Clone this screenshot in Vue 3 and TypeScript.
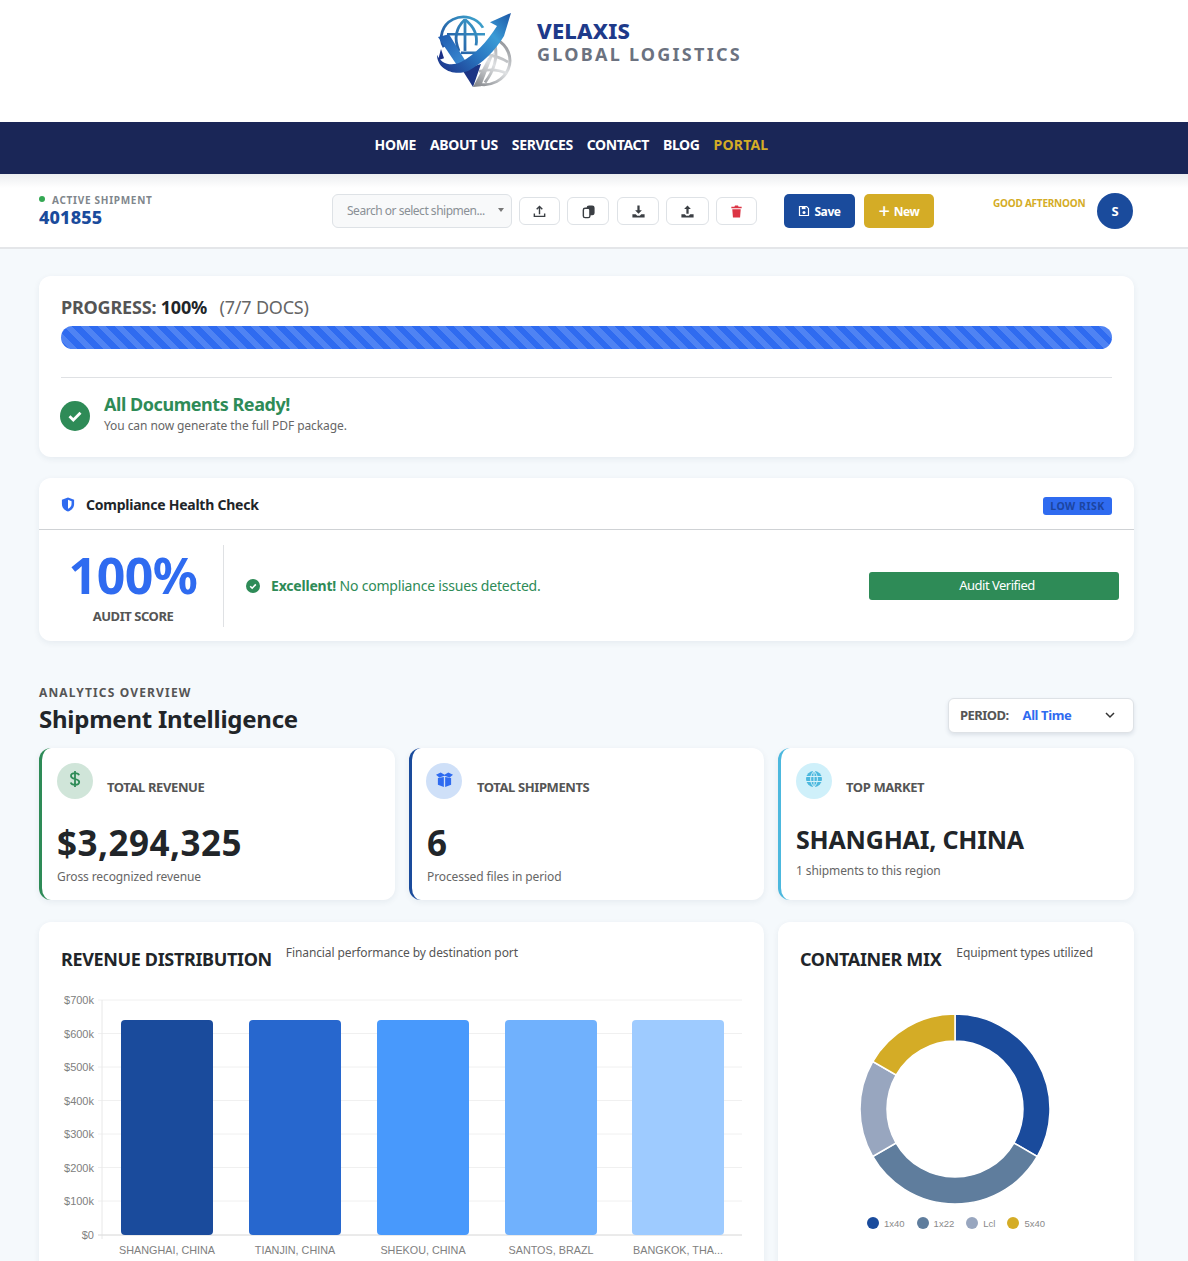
<script setup lang="ts">
const navItems = ['HOME', 'ABOUT US', 'SERVICES', 'CONTACT', 'BLOG']
const ticks = [
  { label: '$700k', y: 0 }, { label: '$600k', y: 33.5 }, { label: '$500k', y: 67 }, { label: '$400k', y: 100.5 },
  { label: '$300k', y: 134 }, { label: '$200k', y: 167.5 }, { label: '$100k', y: 201 }, { label: '$0', y: 235 },
]
const bars = [
  { x: 19, color: '#1a4b9c', label: 'SHANGHAI, CHINA' },
  { x: 147, color: '#2767ce', label: 'TIANJIN, CHINA' },
  { x: 275, color: '#4899fc', label: 'SHEKOU, CHINA' },
  { x: 403, color: '#70b1fd', label: 'SANTOS, BRAZL' },
  { x: 530, color: '#9ecbff', label: 'BANGKOK, THA...' },
]
function arc(a0: number, a1: number): string {
  const R = 95, r = 68, cx = 100, cy = 100
  const p = (rad: number, a: number) => {
    const t = (a - 90) * Math.PI / 180
    return `${(cx + rad * Math.cos(t)).toFixed(2)} ${(cy + rad * Math.sin(t)).toFixed(2)}`
  }
  return `M${p(R, a0)}A${R} ${R} 0 0 1 ${p(R, a1)}L${p(r, a1)}A${r} ${r} 0 0 0 ${p(r, a0)}Z`
}
const slices = [
  { d: arc(0, 120), color: '#1a4b9c', label: '1x40' },
  { d: arc(120, 240), color: '#5f7d9d', label: '1x22' },
  { d: arc(240, 300), color: '#98a6bf', label: 'Lcl' },
  { d: arc(300, 360), color: '#d4ac26', label: '5x40' },
]
</script>

<template>
  <div class="page">
    <header class="brand">
      <svg class="logo" viewBox="0 0 78 82" preserveAspectRatio="none" aria-label="Velaxis logo">
        <defs>
          <linearGradient id="gArrow" gradientUnits="userSpaceOnUse" x1="2" y1="66" x2="76" y2="1">
            <stop offset="0" stop-color="#1b2f86" />
            <stop offset="0.45" stop-color="#2a78c2" />
            <stop offset="0.7" stop-color="#3a9bd6" />
            <stop offset="1" stop-color="#1c57a6" />
          </linearGradient>
          <linearGradient id="gSilver" gradientUnits="userSpaceOnUse" x1="38" y1="80" x2="74" y2="30">
            <stop offset="0" stop-color="#7f8287" />
            <stop offset="0.5" stop-color="#dfe1e3" />
            <stop offset="1" stop-color="#85888d" />
          </linearGradient>
          <linearGradient id="gGlobe" gradientUnits="userSpaceOnUse" x1="8" y1="44" x2="50" y2="8">
            <stop offset="0" stop-color="#1d4a9b" />
            <stop offset="1" stop-color="#3fa8cf" />
          </linearGradient>
          <linearGradient id="gV" x1="0" y1="0" x2="1" y2="1">
            <stop offset="0" stop-color="#1d58ad" />
            <stop offset="1" stop-color="#3d8fd6" />
          </linearGradient>
        </defs>
        <g fill="none" stroke="url(#gGlobe)" stroke-width="2.800">
          <path d="M9 38A22 22 0 0 1 48 17" />
          <path d="M30 8V42" />
          <path d="M30 8Q16 22 24 42" />
          <path d="M30 8Q44 20 41 36" />
          <path d="M12 24H50" />
          <path d="M26 44H41" />
        </g>
        <g fill="none" stroke="url(#gSilver)" stroke-width="3">
          <path d="M62 30A26 26 0 0 1 44 78" />
          <path d="M52 46Q64 48 73 54" />
          <path d="M44 64Q60 60 71 66" />
          <path d="M60 36Q64 56 50 76" />
        </g>
        <path d="M3 27L14 24L30 52L23 59Z" fill="url(#gV)" />
        <path d="M27 62L38 81L46 56Z" fill="#1c3484" />
        <path d="M38 81L53 50L59 44L46 80Z" fill="url(#gSilver)" />
        <path d="M2 46C2 62 20 70 34 63C47 56 60 42 69 26L76 1L55 11L62 15C52 32 40 46 26 54C16 59 6 56 2 46Z" fill="url(#gArrow)" />
        <path d="M6 40L3 52L9 50Z" fill="#1b2f86" />
      </svg>
      <div class="brand-text">
        <div class="brand-name">VELAXIS</div>
        <div class="brand-sub">GLOBAL LOGISTICS</div>
      </div>
    </header>

    <nav class="nav">
      <a v-for="n in navItems" :key="n" class="nav-link">{{ n }}</a>
      <a class="nav-link portal">PORTAL</a>
    </nav>

    <section class="toolbar">
      <div class="active">
        <div class="active-label"><span class="dot"></span>ACTIVE SHIPMENT</div>
        <div class="active-num">401855</div>
      </div>
      <div class="select">
        <span>Search or select shipmen...</span>
        <span class="caret"></span>
      </div>
      <button class="icon-btn b1" aria-label="Upload">
        <svg viewBox="0 0 16 16" class="ic"><path d="M8 11V3M5 5.600L8 2.600l3 3M2.500 10v3.200h11V10" fill="none" stroke="#3b3f44" stroke-width="1.500" /></svg>
      </button>
      <button class="icon-btn b2" aria-label="Copy">
        <svg viewBox="0 0 16 16" class="ic"><rect x="6" y="1.500" width="8.500" height="10.500" rx="2.500" fill="#3b3f44" /><rect x="2.500" y="4.500" width="7" height="10" rx="1.800" fill="#fff" stroke="#3b3f44" stroke-width="1.500" /></svg>
      </button>
      <button class="icon-btn b3" aria-label="Download">
        <svg viewBox="0 0 16 16" class="ic"><path d="M6.800 1.500h2.400v5.200h2.400L8 10.400 4.400 6.700h2.400z" fill="#3b3f44" /><path d="M1.500 11h3.600l1.500 1.400h2.800L10.900 11h3.600v3.500h-13z" fill="#3b3f44" /></svg>
      </button>
      <button class="icon-btn b4" aria-label="Export">
        <svg viewBox="0 0 16 16" class="ic"><path d="M6.800 10.400h2.400V5.300h2.400L8 1.500 4.400 5.300h2.400z" fill="#3b3f44" /><path d="M1.500 11h3.600l1.500 1.400h2.800L10.900 11h3.600v3.500h-13z" fill="#3b3f44" /></svg>
      </button>
      <button class="icon-btn b5" aria-label="Delete">
        <svg viewBox="0 0 16 16" class="ic"><path d="M2.500 2.800h3.300l.6-1.100h3.200l.6 1.100h3.300v1.700h-11zM3.500 5.500h9l-.7 8.800H4.200z" fill="#dc3545" /></svg>
      </button>
      <button class="action save">
        <svg viewBox="0 0 16 16" class="ic-sm"><path d="M2 2h9.500L14 4.500V14H2z" fill="none" stroke="#fff" stroke-width="1.600" /><rect x="5" y="2.500" width="5" height="3" fill="#fff" /><circle cx="8" cy="10" r="2" fill="#fff" /></svg>
        Save
      </button>
      <button class="action new"><span class="plus">+</span> New</button>
      <div class="greet">GOOD AFTERNOON</div>
      <div class="avatar">S</div>
    </section>

    <main class="content">
      <section class="card progress-card">
        <div class="progress-title">PROGRESS: <b>100%</b> <span>(7/7 DOCS)</span></div>
        <div class="progress-bar"></div>
        <hr class="rule" />
        <div class="ready">
          <svg viewBox="0 0 30 30" class="ready-ic"><circle cx="15" cy="15" r="15" fill="#2e8b57" /><path d="M9.500 15.200l3.800 3.800 7.200-7.200" fill="none" stroke="#fff" stroke-width="2.800" /></svg>
          <div>
            <div class="ready-title">All Documents Ready!</div>
            <div class="ready-sub">You can now generate the full PDF package.</div>
          </div>
        </div>
      </section>

      <section class="card compliance">
        <div class="comp-head">
          <svg viewBox="0 0 14 16" class="shield"><path d="M7 0.500L13.500 3v4.500c0 4-2.700 6.700-6.500 8C3.200 14.200.5 11.500.5 7.500V3z" fill="#2f6bf0" /><path d="M7 3L10.800 4.500V7.500c0 2.400-1.500 4-3.800 5z" fill="#fff" /></svg>
          <span class="comp-title">Compliance Health Check</span>
          <span class="badge">LOW RISK</span>
        </div>
        <div class="comp-body">
          <div class="score">
            <div class="score-num">100%</div>
            <div class="score-label">AUDIT SCORE</div>
          </div>
          <div class="comp-msg">
            <svg viewBox="0 0 14 14" class="msg-ic"><circle cx="7" cy="7" r="7" fill="#2e8b57" /><path d="M4.200 7.200l2 2 3.600-3.800" fill="none" stroke="#fff" stroke-width="1.600" /></svg>
            <span><b>Excellent!</b> No compliance issues detected.</span>
          </div>
          <div class="verified">Audit Verified</div>
        </div>
      </section>

      <section class="analytics-head">
        <div>
          <div class="eyebrow">ANALYTICS OVERVIEW</div>
          <h2 class="intel">Shipment Intelligence</h2>
        </div>
        <div class="period">
          <span class="period-label">PERIOD:</span>
          <span class="period-val">All Time</span>
          <svg viewBox="0 0 12 12" class="chev"><path d="M2 4l4 4 4-4" fill="none" stroke="#333" stroke-width="1.500" /></svg>
        </div>
      </section>

      <section class="kpis">
        <article class="card kpi green">
          <div class="kpi-head">
            <span class="kpi-ic ic-green">
              <svg viewBox="0 0 12 18" class="kpi-glyph"><path d="M10 5.200C9.600 3.800 8 3.200 6 3.200 3.800 3.200 2 4.200 2 6c0 4 8.200 2 8.200 6 0 1.800-1.900 2.800-4.200 2.800-2.200 0-3.800-.8-4.300-2.400M6 1v16" fill="none" stroke="#2e8b57" stroke-width="1.800" /></svg>
            </span>
            <span class="kpi-label">TOTAL REVENUE</span>
          </div>
          <div class="kpi-value">$3,294,325</div>
          <div class="kpi-sub">Gross recognized revenue</div>
        </article>
        <article class="card kpi blue">
          <div class="kpi-head">
            <span class="kpi-ic ic-blue">
              <svg viewBox="0 0 20 18" class="kpi-glyph wide"><path d="M1 4L6 1.500 10 4 14 1.500 19 4 15.500 7 10 5 4.500 7z" fill="#2f6bf0" /><path d="M3 7.500L9.300 6.300V17L3 14.500zM17 7.500L10.700 6.300V17L17 14.500z" fill="#2f6bf0" /></svg>
            </span>
            <span class="kpi-label">TOTAL SHIPMENTS</span>
          </div>
          <div class="kpi-value">6</div>
          <div class="kpi-sub">Processed files in period</div>
        </article>
        <article class="card kpi sky">
          <div class="kpi-head">
            <span class="kpi-ic ic-sky">
              <svg viewBox="0 0 16 16" class="kpi-glyph globe"><circle cx="8" cy="8" r="8" fill="#4cb8de" /><path d="M0 5.500h16M0 10.500h16M8 0v16M8 0C3.500 4 3.500 12 8 16M8 0c4.500 4 4.500 12 0 16" fill="none" stroke="#d2f1fa" stroke-width="1" /></svg>
            </span>
            <span class="kpi-label">TOP MARKET</span>
          </div>
          <div class="kpi-value market">SHANGHAI, CHINA</div>
          <div class="kpi-sub market-sub">1 shipments to this region</div>
        </article>
      </section>

      <section class="charts">
        <article class="card chart-card">
          <div class="chart-head">
            <h3 class="chart-title">REVENUE DISTRIBUTION</h3>
            <span class="chart-sub">Financial performance by destination port</span>
          </div>
          <svg class="bar-svg" viewBox="-62 -5 704 265">
            <g v-for="t in ticks" :key="t.label">
              <line x1="-4" x2="640" :y1="t.y" :y2="t.y" stroke="#f0f0f0" />
              <text x="-8" :y="t.y + 4" text-anchor="end" class="axis">{{ t.label }}</text>
            </g>
            <line x1="0" x2="0" y1="0" y2="239" stroke="#e8e8e8" />
            <line x1="-4" x2="640" y1="235" y2="235" stroke="#dedede" />
            <g v-for="b in bars" :key="b.label">
              <path :d="`M${b.x} 24a4 4 0 0 1 4-4h84a4 4 0 0 1 4 4v207a4 4 0 0 1-4 4h-84a4 4 0 0 1-4-4z`" :fill="b.color" />
              <text :x="b.x + 46" y="254" text-anchor="middle" class="axis cat">{{ b.label }}</text>
            </g>
          </svg>
        </article>
        <article class="card chart-card mix">
          <div class="chart-head">
            <h3 class="chart-title">CONTAINER MIX</h3>
            <span class="chart-sub">Equipment types utilized</span>
          </div>
          <svg class="donut" viewBox="5 5 190 190">
            <path v-for="s in slices" :key="s.label" :d="s.d" :fill="s.color" stroke="#fff" stroke-width="1.500" />
          </svg>
          <div class="legend">
            <span v-for="s in slices" :key="s.label" class="leg">
              <i class="swatch" :style="{ background: s.color }"></i>{{ s.label }}
            </span>
          </div>
        </article>
      </section>
    </main>
  </div>
</template>

<style>
html, body { margin: 0; background: #f5f9fc; }
</style>

<style scoped>
* { box-sizing: border-box; }
.page { width: 1188px; height: 1261px; overflow: hidden; background: #f5f9fc; font-family: "Noto Sans", "Open Sans", sans-serif; color: #212529; }

.brand { height: 122px; background: #fff; display: flex; padding: 12px 0 0 435px; gap: 24px; }
.logo { width: 78px; height: 76px; }
.brand-text { padding-top: 5px; }
.brand-name { font-size: 22px; line-height: 26px; font-weight: 800; color: #1e3a8a; letter-spacing: 0.2px; }
.brand-sub { font-size: 18px; line-height: 22px; font-weight: 700; color: #6b7280; letter-spacing: 2.250px; }

.nav { height: 52px; background: #1a2657; display: flex; align-items: center; justify-content: center; gap: 14px; padding: 0 45px 7px 0; }
.nav-link { font-size: 14px; font-weight: 700; color: #fff; letter-spacing: -0.36px; }
.nav-link.portal { color: #d4ac26; letter-spacing: 0.2px; }

.toolbar { height: 75px; background: linear-gradient(#eceef0 0, #fff 14px); border-bottom: 2px solid #e4e6e9; display: flex; align-items: flex-start; padding: 20px 0 0 39px; }
.active { width: 293px; }
.active-label { font-size: 10px; line-height: 12px; font-weight: 700; letter-spacing: 0.72px; color: #80868c; display: flex; align-items: center; }
.dot { width: 6px; height: 6px; border-radius: 50%; background: #34a853; margin-right: 7px; position: relative; top: -1px; }
.active-num { font-size: 18px; line-height: 23px; font-weight: 800; color: #1a4b9c; letter-spacing: 0.15px; }
.select { width: 180px; height: 34px; background: #f8f9fa; border: 1px solid #dee2e6; border-radius: 6px; font-size: 12px; color: #8a9096; display: flex; align-items: center; padding: 0 7px 2px 14px; justify-content: space-between; letter-spacing: -0.48px; }
.caret { width: 0; height: 0; border-left: 3px solid transparent; border-right: 3px solid transparent; border-top: 4px solid #777; }
.icon-btn { height: 28px; margin-top: 3px; background: #fff; border: 1px solid #dee2e6; border-radius: 6px; padding: 0; display: flex; align-items: center; justify-content: center; margin-left: 7px; }
.b1 { width: 41px; }
.b2 { width: 42px; margin-left: 7px; }
.b3 { width: 42px; margin-left: 8px; }
.b4 { width: 43px; }
.b5 { width: 41px; }
.ic { width: 15px; height: 15px; }
.ic-sm { width: 12px; height: 12px; }
.action { height: 34px; border: none; border-radius: 5px; color: #fff; font: 700 12px "Noto Sans", sans-serif; letter-spacing: -0.4px; display: flex; align-items: center; justify-content: center; gap: 4px; padding: 0; }
.save { width: 71px; background: #1a4b9c; margin-left: 27px; }
.new { width: 70px; background: #d4ac26; margin-left: 9px; }
.plus { font-size: 20px; line-height: 16px; font-weight: 500; }
.greet { width: 92px; margin-left: 59px; font-size: 10px; line-height: 18px; font-weight: 700; color: #d4ac26; letter-spacing: -0.22px; white-space: nowrap; }
.avatar { width: 36px; height: 36px; margin-left: 12px; margin-top: -1px; border-radius: 50%; background: #1a4b9c; color: #fff; font-size: 13px; font-weight: 700; display: flex; align-items: center; justify-content: center; }

.content { padding: 27px 54px 0 39px; }
.card { background: #fff; border-radius: 12px; box-shadow: 0 2px 6px rgba(30, 50, 80, 0.07); }

.progress-card { height: 181px; padding: 19px 22px 0; }
.progress-title { font-size: 18px; line-height: 24px; font-weight: 700; color: #555; letter-spacing: -0.2px; }
.progress-title b { font-weight: 700; color: #212529; }
.progress-title span { font-weight: 400; color: #666; margin-left: 8px; }
.progress-bar { height: 23px; margin-top: 7px; border-radius: 12px; background: repeating-linear-gradient(45deg, #2f6bf0 0 6px, #4f83f3 6px 12px); }
.rule { border: 0; border-top: 1px solid #dfe1e4; margin: 28px 0 0; }
.ready { display: flex; align-items: center; gap: 14px; margin-top: 13px; }
.ready-ic { width: 30px; height: 30px; flex: none; position: relative; top: 3px; margin-left: -1px; }
.ready-title { font-size: 18px; line-height: 26px; font-weight: 700; color: #2e8b57; letter-spacing: -0.45px; }
.ready-sub { font-size: 12px; line-height: 16px; padding-top: 1px; color: #666; letter-spacing: -0.08px; }

.compliance { height: 163px; margin-top: 21px; }
.comp-head { height: 52px; border-bottom: 1px solid #cfd2d5; display: flex; align-items: center; padding: 2px 22px 0; }
.shield { width: 14px; height: 15px; }
.comp-title { font-size: 14px; font-weight: 700; margin-left: 11px; letter-spacing: -0.24px; }
.badge { margin: 2px 0 0 auto; width: 69px; height: 18px; border-radius: 3px; background: #2f6bf0; color: #1c45a0; font-size: 10.500px; font-weight: 700; letter-spacing: 0.5px; display: flex; align-items: center; justify-content: center; }
.comp-body { display: flex; align-items: flex-start; padding: 15px 15px 0 0; }
.score { width: 185px; height: 82px; border-right: 1px solid #dfe1e4; text-align: center; padding-left: 4px; }
.score-num { font-size: 50px; line-height: 60px; font-weight: 700; color: #2f6bf0; letter-spacing: -0.5px; }
.score-label { font-size: 13px; line-height: 20px; margin-top: 1px; font-weight: 700; color: #555; letter-spacing: -0.45px; }
.comp-msg { display: flex; align-items: center; font-size: 14px; line-height: 20px; color: #2e8b57; margin-left: 22px; height: 82px; flex: 1; letter-spacing: -0.2px; }
.msg-ic { width: 14px; height: 14px; margin-right: 11px; }
.verified { width: 250px; height: 28px; margin-top: 27px; padding: 0 0 2px 6px; background: #2e8b57; color: #fff; border-radius: 3px; font-size: 13px; letter-spacing: -0.5px; display: flex; align-items: center; justify-content: center; }

.analytics-head { margin-top: 44px; display: flex; justify-content: space-between; align-items: flex-start; }
.eyebrow { font-size: 12px; line-height: 16px; font-weight: 700; color: #555; letter-spacing: 1.150px; }
.intel { margin: 2px 0 0; font-size: 24px; line-height: 32px; font-weight: 700; color: #212529; letter-spacing: -0.25px; }
.period { width: 186px; height: 35px; margin-top: 13px; background: #fff; border: 1px solid #dee2e6; border-radius: 6px; box-shadow: 0 2px 4px rgba(30, 50, 80, 0.12); display: flex; align-items: center; padding: 0 17px 2px 11px; font-size: 13px; }
.period-label { font-weight: 700; color: #555; letter-spacing: -0.55px; }
.period-val { margin-left: 14px; font-weight: 700; color: #2f6bf0; letter-spacing: -0.4px; flex: 1; }
.chev { width: 12px; height: 12px; }

.kpis { margin-top: 13px; display: grid; grid-template-columns: 356px 355px 356px; gap: 14px; }
.kpi { height: 152px; padding: 15px 15px 0 15px; border-left: 3px solid; }
.green { border-left-color: #2e8b57; }
.blue { border-left-color: #1a4b9c; }
.sky { border-left-color: #4cb8de; }
.kpi-head { display: flex; align-items: flex-start; gap: 14px; height: 36px; }
.kpi-ic { width: 36px; height: 36px; border-radius: 50%; display: flex; align-items: center; justify-content: center; flex: none; }
.ic-green { background: #d0e5d9; }
.ic-blue { background: #cfe0f8; margin-left: -1px; margin-right: 1px; }
.ic-sky { background: #cff0fa; }
.kpi-glyph { width: 12px; height: 18px; position: relative; top: -2px; }
.kpi-glyph.wide { width: 19px; height: 17px; }
.kpi-glyph.globe { width: 16px; height: 16px; }
.kpi-label { font-size: 13px; line-height: 20px; margin-top: 14px; font-weight: 700; color: #555; letter-spacing: -0.4px; }
.kpi-value { margin-top: 21px; font-size: 35px; line-height: 46px; font-weight: 700; color: #212529; letter-spacing: 0.5px; }
.kpi-sub { font-size: 12px; line-height: 18px; color: #666; margin-top: 2px; letter-spacing: -0.1px; }
.market { font-size: 25px; line-height: 34px; margin-top: 23px; letter-spacing: -0.2px; }
.market-sub { margin-top: 6px; }

.charts { margin-top: 22px; display: grid; grid-template-columns: 725px 356px; gap: 14px; }
.chart-card { height: 400px; padding: 22px 22px 0; }
.chart-head { display: flex; align-items: flex-start; gap: 14px; height: 34px; }
.chart-title { margin: 0; font-size: 18px; line-height: 30px; font-weight: 700; color: #212529; letter-spacing: -0.35px; white-space: nowrap; }
.chart-sub { font-size: 12px; line-height: 16px; color: #555; margin-top: 1px; letter-spacing: -0.1px; }
.mix .chart-head { gap: 15px; }
.bar-svg { display: block; width: 704px; height: 265px; margin: 17px 0 0 -21px; }
.axis { font: 11px "Liberation Sans", Arial, sans-serif; fill: #808080; }
.cat { font-size: 10.800px; }
.donut { display: block; width: 190px; height: 190px; margin: 36px 0 0 60px; }
.legend { display: flex; justify-content: center; gap: 12px; margin-top: 13px; font: 9.500px "Liberation Sans", Arial, sans-serif; color: #8a8a8a; }
.leg { display: flex; align-items: center; gap: 5px; }
.swatch { width: 12px; height: 12px; border-radius: 50%; display: block; }
</style>
